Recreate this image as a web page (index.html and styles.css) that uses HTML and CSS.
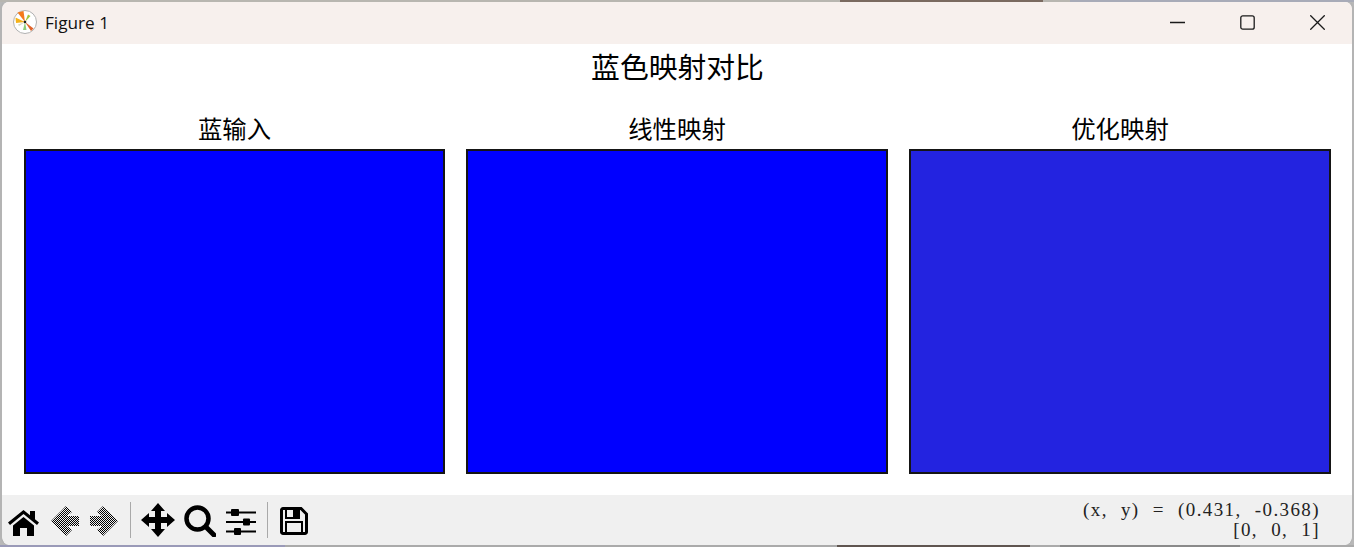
FILE: index.html
```html
<!DOCTYPE html>
<html lang="zh">
<head>
<meta charset="utf-8">
<title>Figure 1</title>
<link rel="stylesheet" href="styles.css">
</head>
<body>
<div class="window">
  <header class="titlebar">
    <svg class="app-icon" viewBox="0 0 24 24" aria-hidden="true">
      <circle cx="12" cy="12" r="11.500" fill="#fff" stroke="#b0b0b0"/>
      <path d="M12 12 4.500 2.500 10.500 1Z" fill="#f47a1c"/>
      <path d="M12 12 2.500 7.500 3 13Z" fill="#f5b21a"/>
      <path d="M12 12 20.500 18.500 18 21Z" fill="#e0632a"/>
      <path d="M12 12 15 4.500 17.500 6Z" fill="#a4c639"/>
      <path d="M12 12 10 20 13.500 20Z" fill="#8fce7a"/>
      <path d="M12 12 5 14.500 6 16Z" fill="#d9d9c0"/>
      <circle cx="12" cy="12" r="1.300" fill="#222"/>
    </svg>
    <span class="window-title">Figure 1</span>
    <div class="window-controls">
      <svg class="ctl" viewBox="0 0 15 15" aria-hidden="true"><path d="M0 7.500h15"/></svg>
      <svg class="ctl" viewBox="0 0 15 15" aria-hidden="true"><rect x=".8" y=".8" width="13.400" height="13.400" rx="2"/></svg>
      <svg class="ctl" viewBox="0 0 15 15" aria-hidden="true"><path d="M.3.3l14.400 14.400M14.700.3L.3 14.700"/></svg>
    </div>
  </header>
  <main class="canvas">
    <h1 class="suptitle">蓝色映射对比</h1>
    <div class="plots">
      <section class="plot"><h2 class="plot-title">蓝输入</h2><div class="axes blue"></div></section>
      <section class="plot"><h2 class="plot-title">线性映射</h2><div class="axes blue"></div></section>
      <section class="plot"><h2 class="plot-title">优化映射</h2><div class="axes indigo"></div></section>
    </div>
  </main>
  <footer class="toolbar">
    <svg class="tool home" viewBox="0 0 31 26" aria-hidden="true"><path d="M0 12.500 15.500 0 22 5.200V1h5v8.200l4 3.300-2 2.500L15.500 4 2 15Z"/><path d="M5 15.500 15.500 7 26 15.500V26h-7v-8h-7v8H5Z"/></svg>
    <svg class="tool arrow" viewBox="0 0 28 30" aria-hidden="true">
      <defs><pattern id="checker" width="2" height="2" patternUnits="userSpaceOnUse"><path d="M0 0h1v1H0ZM1 1h1v1H1Z"/></pattern></defs>
      <path fill="url(#checker)" d="M0 15 15 0l6 6-5 4h12v10H16l5 4-6 6Z"/>
    </svg>
    <svg class="tool arrow next" viewBox="0 0 28 30" aria-hidden="true"><path fill="url(#checker)" d="M28 15 13 0 7 6l5 4H0v10h12l-5 4 6 6Z"/></svg>
    <i class="sep"></i>
    <svg class="tool move" viewBox="0 0 34 34" aria-hidden="true"><path d="M17 0l7 8h-4v6h6v-4l8 7-8 7v-4h-6v6h4l-7 8-7-8h4v-6H8v4l-8-7 8-7v4h6V8h-4Z"/></svg>
    <svg class="tool zoom" viewBox="0 0 32 32" aria-hidden="true"><circle cx="13.500" cy="13.500" r="11" fill="none" stroke="#000" stroke-width="4.500"/><path d="M22 22l8 8" stroke="#000" stroke-width="5" stroke-linecap="round"/></svg>
    <svg class="tool sliders" viewBox="0 0 30 26" aria-hidden="true"><path d="M0 2.500h30v2H0ZM0 12h30v2H0ZM0 21.500h30v2H0Z"/><rect x="5" y="0" width="8" height="7" rx="1"/><rect x="17" y="9.500" width="7" height="7" rx="1"/><rect x="8" y="19" width="7" height="7" rx="1"/></svg>
    <i class="sep second"></i>
    <svg class="tool save" viewBox="0 0 28 28" aria-hidden="true"><path d="M3 1.500h18l5.500 5.500v18a1.500 1.500 0 0 1-1.500 1.500H3A1.500 1.500 0 0 1 1.500 25V3A1.500 1.500 0 0 1 3 1.500Z" fill="none" stroke="#000" stroke-width="3"/><rect x="6" y="1.500" width="13" height="9.500" fill="none" stroke="#000" stroke-width="2"/><rect x="13" y="2" width="5" height="8"/><rect x="6" y="15" width="16" height="12" fill="none" stroke="#000" stroke-width="2"/></svg>
    <div class="status">
      <div>(x, y) = (0.431, -0.368)</div>
      <div>[0, 0, 1]</div>
    </div>
  </footer>
</div>
</body>
</html>
```
FILE: styles.css
```css
* { box-sizing: border-box; }
html, body { margin: 0; height: 100%; }
body {
  width: 1354px;
  height: 547px;
  overflow: hidden;
  background:
    linear-gradient(90deg, #b8b6b0 0 840px, #7a6a60 840px 1043px, #b8b6b0 1043px 1070px, #a8abb8 1070px) top / 100% 2px no-repeat,
    linear-gradient(90deg, #9a9ab8 0 285px, #aaa 285px 837px, #5f5550 837px 1030px, #aaa 1030px 1060px, #8a8a8a 1060px 1240px, #aaa 1240px) bottom / 100% 2px no-repeat,
    #b8b8b8;
}
.window {
  width: 1354px;
  height: 545px;
  display: flex;
  flex-direction: column;
  border: 2px solid #b4b4b4;
  border-top-color: transparent;
  border-bottom: 0;
  border-radius: 9px;
  background: #fff padding-box;
  overflow: hidden;
}
.titlebar {
  height: 42px;
  flex: none;
  display: flex;
  align-items: center;
  padding: 0 0 2px 11px;
  background: #f7f0ed;
}
.app-icon { width: 24px; height: 24px; flex: none; }
.window-title {
  margin-left: 8px;
  font: 17.200px "Open Sans", "Noto Sans", sans-serif;
  color: #111;
}
.window-controls {
  margin-left: auto;
  margin-right: 27px;
  display: flex;
  gap: 55px;
  align-items: center;
}
.ctl { width: 15px; height: 15px; fill: none; stroke: #1a1a1a; stroke-width: 1.300; display: block; }
.canvas {
  flex: 1;
  display: flex;
  flex-direction: column;
  padding: 0 21px 21px 22px;
  font-family: "Noto Sans CJK SC", sans-serif;
  color: #000;
}
.suptitle {
  margin: 4px 0 0;
  font-size: 28.800px;
  line-height: 36px;
  font-weight: 400;
  text-align: center;
}
.plots {
  flex: 1;
  margin-top: 31px;
  display: grid;
  grid-template-columns: 421px 422px 422px;
  column-gap: 21px;
}
.plot { display: flex; flex-direction: column; }
.plot-title {
  margin: 0 0 8px;
  font-size: 24.400px;
  line-height: 26px;
  font-weight: 400;
  text-align: center;
}
.axes { flex: 1; border: 2px solid #151515; }
.blue { background: #0000ff; }
.indigo { background: #2323e0; }
.toolbar {
  height: 50px;
  flex: none;
  display: flex;
  align-items: center;
  padding-left: 6px;
  background: #f0f0f0;
}
.tool { flex: none; display: block; }
.home { width: 31px; height: 26px; margin-top: 6px; }
.arrow { width: 28px; height: 30px; margin-left: 12px; margin-top: 2px; }
.next { margin-left: 11px; }
.move { width: 34px; height: 34px; margin-left: 10px; }
.zoom { width: 32px; height: 32px; margin-left: 9px; margin-top: 2px; }
.sliders { width: 30px; height: 26px; margin-left: 10px; margin-top: 4px; }
.save { width: 28px; height: 28px; margin-left: 12px; margin-top: 2px; }
.sep { flex: none; width: 1px; height: 36px; margin-left: 12px; background: #a9a9a9; }
.second { margin-left: 11px; }
.status {
  margin-left: auto;
  margin-right: 32px;
  font: 19px/20px "Liberation Serif", serif;
  letter-spacing: 1.400px;
  word-spacing: 7px;
  color: #222;
  text-align: right;
}
```
